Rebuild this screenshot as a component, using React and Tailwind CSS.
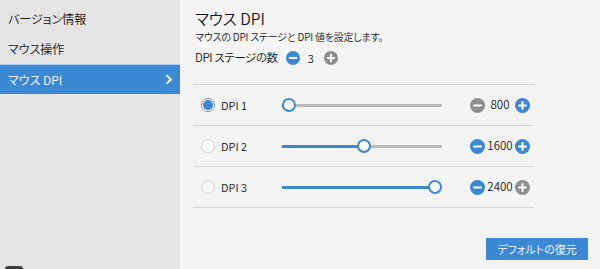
import React from "react";

const FONT = "font-['Noto_Sans_CJK_JP','Noto_Sans',sans-serif] [font-feature-settings:'palt'] font-[350]";

const MENU = [
  { label: "バージョン情報" },
  { label: "マウス操作" },
  { label: "マウス DPI", active: true },
];

const STAGES = [
  { name: "DPI 1", value: 800, pct: 0, checked: true, minus: false, plus: true },
  { name: "DPI 2", value: 1600, pct: 0.515, checked: false, minus: true, plus: true },
  { name: "DPI 3", value: 2400, pct: 1, checked: false, minus: true, plus: false },
];

function RoundButton({ kind, enabled, size = 15 }) {
  const fill = enabled ? "#3b88d4" : "#8e8e8e";
  return (
    <svg width={size} height={size} viewBox="0 0 16 16" className="shrink-0">
      <circle cx="8" cy="8" r="8" fill={fill} />
      <path d="M4.3 8h7.4" stroke="#fff" strokeWidth="2.2" strokeLinecap="round" />
      {kind === "plus" && (
        <path d="M8 4.3v7.4" stroke="#fff" strokeWidth="2.2" strokeLinecap="round" />
      )}
    </svg>
  );
}

function Radio({ checked }) {
  return checked ? (
    <span className="flex h-[14px] w-[14px] items-center justify-center rounded-full border border-[#8a8a8a] bg-white">
      <span className="h-[10px] w-[10px] rounded-full bg-[#3b88d4]" />
    </span>
  ) : (
    <span className="h-[14px] w-[14px] rounded-full border border-[#d2d2d2] bg-[#f8f8f8]" />
  );
}

function Slider({ pct }) {
  const width = 160;
  const thumb = 14;
  const left = pct * (width - thumb);
  return (
    <div className="relative h-[14px] w-[160px] shrink-0">
      <div className="absolute left-0 right-0 top-[6px] h-[3px] bg-[#bcbcbc]" />
      <div
        className="absolute left-0 top-[6px] h-[3px] bg-[#3b88d4]"
        style={{ width: left + thumb / 2 }}
      />
      <div
        className="absolute top-0 h-[14px] w-[14px] rounded-full border-2 border-[#3b88d4] bg-white"
        style={{ left }}
      />
    </div>
  );
}

export default function App() {
  return (
    <div className={`flex h-screen w-full text-[#141414] ${FONT}`}>
      {/* Sidebar */}
      <aside className="flex w-[180px] shrink-0 flex-col bg-[#e4e4e4] pt-[4px]">
        {MENU.map((m) =>
          m.active ? (
            <div
              key={m.label}
              className="flex h-[30px] items-center justify-between border-t border-[#a9cbee] bg-[#3b88d4] pl-[8px] pr-[7px] text-[12px] text-white"
            >
              <span>{m.label}</span>
              <svg width="8" height="11" viewBox="0 0 8 11">
                <path d="M1.5 1.2l4.3 4.3-4.3 4.3" fill="none" stroke="#fff" strokeWidth="1.9" />
              </svg>
            </div>
          ) : (
            <div key={m.label} className="flex h-[30px] items-center pl-[8px] text-[12px]">
              {m.label}
            </div>
          )
        )}
        <div className="mt-auto ml-[5px] h-[3px] w-[18px] rounded-t-sm bg-[#3c3c3c]" />
      </aside>

      {/* Main */}
      <main className="flex flex-1 flex-col bg-[#f4f4f4] pl-[13px] pt-[8px]">
        <h1 className="ml-[2px] text-[15.5px] leading-[20px]">マウス DPI</h1>
        <p className="ml-[2px] mt-[2px] text-[10px] leading-[14px] tracking-[-0.2px] text-[#222]">
          マウスの DPI ステージと DPI 値を設定します。
        </p>
        <div className="ml-[2px] mt-[6px] flex h-[16px] items-center text-[11.5px]">
          <span className="tracking-[-0.4px]">DPI ステージの数</span>
          <span className="ml-[8px]">
            <RoundButton kind="minus" enabled size={14} />
          </span>
          <span className="ml-[8px] w-[10px] text-[11px]">3</span>
          <span className="ml-[6px]">
            <RoundButton kind="plus" enabled={false} size={14} />
          </span>
        </div>

        <div className="mt-[18px] w-[341px] border-t border-[#d4d4d4]">
          {STAGES.map((s) => (
            <div
              key={s.name}
              className="flex h-[41px] items-center border-b border-[#d4d4d4] pl-[8px] pr-[4px]"
            >
              <Radio checked={s.checked} />
              <span className="ml-[6px] w-[61px] text-[11px]">{s.name}</span>
              <Slider pct={s.pct} />
              <div className="ml-auto flex items-center">
                <RoundButton kind="minus" enabled={s.minus} />
                <span className="w-[30px] text-center text-[11.5px]">{s.value}</span>
                <RoundButton kind="plus" enabled={s.plus} />
              </div>
            </div>
          ))}
        </div>

        <div className="mt-[30px] flex w-[395px] justify-end">
          <button className="h-[22px] w-[102px] bg-[#3b88d4] text-[11px] text-white">
            デフォルトの復元
          </button>
        </div>
      </main>
    </div>
  );
}
